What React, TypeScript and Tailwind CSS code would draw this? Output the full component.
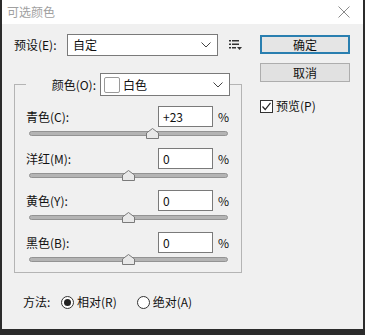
import React from "react";

const F = "font-['Noto_Sans_CJK_SC','Microsoft_YaHei',sans-serif]";

function Chevron() {
  return (
    <svg width="10" height="6" viewBox="0 0 10 6" className="shrink-0">
      <path d="M0.5 0.5 L5 5 L9.5 0.5" fill="none" stroke="#444" strokeWidth="1" />
    </svg>
  );
}

function Slider({ pos }: { pos: number }) {
  return (
    <div className="relative h-[12px] ml-[3px] mr-[2px]">
      <div className="absolute left-0 right-0 top-[4px] h-[5px] rounded-full bg-[#b4b4b4] border border-[#939393]" />
      <svg
        className="absolute top-[1px]"
        style={{ left: pos - 6 }}
        width="13"
        height="11"
        viewBox="0 0 13 11"
      >
        <path d="M6.5 0.5 L12.5 5 L12.5 10.5 L0.5 10.5 L0.5 5 Z" fill="#e8e8e8" stroke="#7a7a7a" strokeWidth="1" />
      </svg>
    </div>
  );
}

function Row({ label, value, pos }: { label: string; value: string; pos: number }) {
  return (
    <div className="flex flex-col">
      <div className="flex items-center h-[21px]">
        <span className="flex-1 text-[12px] text-[#111]">{label}</span>
        <div className="w-[55px] h-[21px] bg-white border border-[#7a7a7a] flex items-center pl-[4px] text-[12px] text-[#111]">
          {value}
        </div>
        <span className="ml-[5px] w-[12px] text-[12px] text-[#111]">%</span>
      </div>
      <Slider pos={pos} />
    </div>
  );
}

function Radio({ checked, label }: { checked: boolean; label: string }) {
  return (
    <div className="flex items-center">
      <div className="w-[13px] h-[13px] rounded-full border border-[#333] bg-white flex items-center justify-center">
        {checked && <div className="w-[7px] h-[7px] rounded-full bg-[#222]" />}
      </div>
      <span className="ml-[3px] text-[12px] text-[#111]">{label}</span>
    </div>
  );
}

export default function App() {
  return (
    <div className={`w-[365px] h-[335px] bg-[#2b2b2b] flex ${F}`}>
      <div className="ml-[2px] w-[361px] h-[329px] flex flex-col bg-[#f0f0f0]">
        {/* title bar */}
        <div className="h-[24px] bg-white flex items-center pl-[5px] pr-[13px]">
          <span className="flex-1 text-[12px] text-[#a0a0a0]">可选颜色</span>
          <svg width="12" height="12" viewBox="0 0 12 12">
            <path d="M0.5 0.5 L11.5 11.5 M11.5 0.5 L0.5 11.5" stroke="#8a8a8a" strokeWidth="1" />
          </svg>
        </div>

        <div className="flex pl-[12px] pt-[10px]">
          {/* left column */}
          <div className="w-[228px] flex flex-col">
            <div className="flex items-center h-[22px]">
              <span className="w-[53px] text-[12px] text-[#111]">预设(E):</span>
              <div className="w-[151px] h-[22px] bg-white border border-[#7a7a7a] flex items-center pl-[5px] pr-[6px]">
                <span className="flex-1 text-[12px] text-[#111]">自定</span>
                <Chevron />
              </div>
              <svg className="ml-[11px]" width="13" height="12" viewBox="0 0 13 12">
                <rect x="0" y="1" width="2" height="1.5" fill="#333" />
                <rect x="3" y="1" width="7" height="1.5" fill="#333" />
                <rect x="0" y="4.5" width="2" height="1.5" fill="#333" />
                <rect x="3" y="4.5" width="7" height="1.5" fill="#333" />
                <rect x="0" y="8" width="2" height="1.5" fill="#333" />
                <rect x="3" y="8" width="4" height="1.5" fill="#333" />
                <path d="M8 8 L13 8 L10.5 11 Z" fill="#333" />
              </svg>
            </div>

            <fieldset className="mt-[17px] w-[228px] min-w-0 border border-[#b4b4b4] px-[11px] pb-[7px]">
              <legend className="w-[204px] h-[23px] flex items-center justify-end gap-[4px]">
                <span className="text-[12px] text-[#111]">颜色(O):</span>
                <div className="w-[130px] h-[23px] bg-white border border-[#7a7a7a] flex items-center pl-[3px] pr-[6px]">
                  <div className="w-[16px] h-[16px] bg-white border border-[#9a9a9a] rounded-[2px]" />
                  <span className="ml-[3px] flex-1 text-[12px] text-[#111]">白色</span>
                  <Chevron />
                </div>
              </legend>
              <div className="pt-[10px] flex flex-col gap-[9px]">
                <Row label="青色(C):" value="+23" pos={123} />
                <Row label="洋红(M):" value="0" pos={99} />
                <Row label="黄色(Y):" value="0" pos={99} />
                <Row label="黑色(B):" value="0" pos={99} />
              </div>
            </fieldset>

            <div className="mt-[21px] h-[16px] flex items-center pl-[9px]">
              <span className="text-[12px] text-[#111] w-[38px]">方法:</span>
              <Radio checked label="相对(R)" />
              <div className="ml-[20px]">
                <Radio checked={false} label="绝对(A)" />
              </div>
            </div>
          </div>

          {/* right column */}
          <div className="ml-[18px] w-[90px] flex flex-col">
            <button className="mt-[1px] h-[19px] w-[90px] border-2 border-[#2a7fb0] bg-[#e5e5e5] text-[12px] text-[#111] flex items-center justify-center">
              确定
            </button>
            <button className="mt-[9px] h-[19px] w-[90px] border border-[#adadad] bg-[#e1e1e1] text-[12px] text-[#111] flex items-center justify-center">
              取消
            </button>
            <div className="mt-[15px] flex items-center">
              <div className="w-[13px] h-[13px] border border-[#333] bg-white flex items-center justify-center">
                <svg width="11" height="11" viewBox="0 0 11 11">
                  <path d="M1.5 5.5 L4.2 8.5 L9.5 1.8" fill="none" stroke="#222" strokeWidth="1.2" />
                </svg>
              </div>
              <span className="ml-[3px] text-[12px] text-[#111]">预览(P)</span>
            </div>
          </div>
        </div>
      </div>
    </div>
  );
}
